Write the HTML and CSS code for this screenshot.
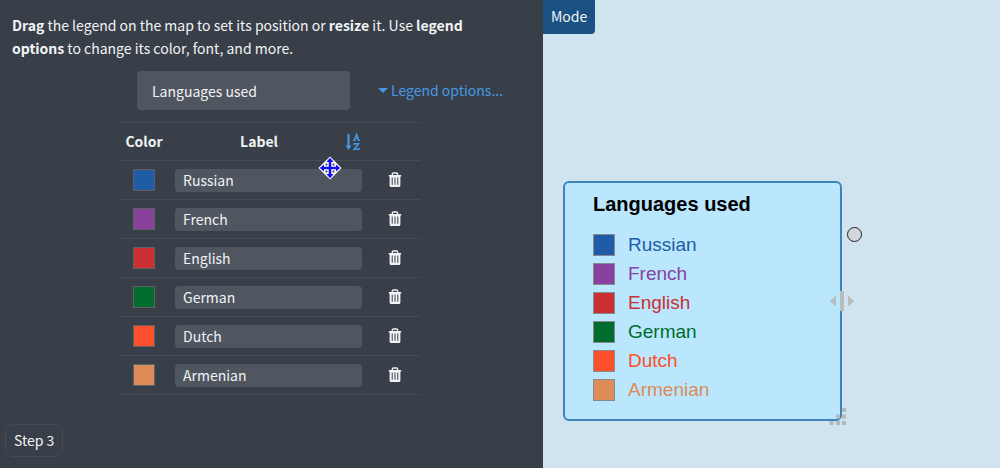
FILE: index.html
```html
<!DOCTYPE html>
<html lang="en">
<head>
    <meta charset="UTF-8">
    <meta name="viewport" content="width=device-width, initial-scale=1.0">
    <title>Map legend</title>
    <link rel="stylesheet" href="styles.css">
</head>
<body>
    <svg class="sprite" aria-hidden="true">
        <symbol id="icon-trash" viewBox="0 0 14 16">
            <path d="M4.3 3.2V2.2Q4.3 1 5.5 1H8.5Q9.7 1 9.7 2.2V3.2" fill="none" stroke="currentColor" stroke-width="1.3"/>
            <path fill="currentColor" fill-rule="evenodd" d="M.8 3H13.2V4.6H12.4V13.4Q12.4 15 10.8 15H3.2Q1.6 15 1.6 13.4V4.6H.8ZM3.7 5.6V12.8H4.7V5.6ZM6.5 5.6V12.8H7.5V5.6ZM9.3 5.6V12.8H10.3V5.6Z"/>
        </symbol>
    </svg>

    <div class="app">
        <main class="panel">
            <p class="intro"><b>Drag</b> the legend on the map to set its position or <b>resize</b> it. Use <b>legend options</b> to change its color, font, and more.</p>

            <div class="title-row">
                <input type="text" class="title-input" value="Languages used" aria-label="Legend title">
                <a href="#" class="options-link"><span class="caret"></span>Legend options...</a>
            </div>

            <table class="legend-table">
                <thead>
                    <tr>
                        <th class="col-color">Color</th>
                        <th class="col-label">
                            <div class="label-head">
                                <span>Label</span>
                                <button type="button" class="icon-button sort-button" aria-label="Sort labels A to Z">
                                    <svg width="16" height="18" viewBox="0 0 16 18" fill="none" stroke="currentColor">
                                        <path d="M3.5 1V14" stroke-width="2.2"/>
                                        <path d="M.4 12.4H6.6L3.5 17Z" fill="currentColor" stroke="none"/>
                                        <path d="M9.2 7.3L11.5 1.4L13.8 7.3M9.8 5.4H13.2M8 7.3H10.4M12.6 7.3H15" stroke-width="1.4"/>
                                        <path d="M9.1 12V10.7H13.6L9.2 16.2H14V14.8" stroke-width="1.4"/>
                                    </svg>
                                </button>
                            </div>
                        </th>
                        <th class="col-delete"></th>
                    </tr>
                </thead>
                <tbody>
                    <tr>
                        <td><button type="button" class="swatch russian" aria-label="Russian color"></button></td>
                        <td><input type="text" class="label-input" value="Russian" aria-label="Label 1"></td>
                        <td><button type="button" class="icon-button" aria-label="Delete Russian"><svg width="14" height="16"><use href="#icon-trash"/></svg></button></td>
                    </tr>
                    <tr>
                        <td><button type="button" class="swatch french" aria-label="French color"></button></td>
                        <td><input type="text" class="label-input" value="French" aria-label="Label 2"></td>
                        <td><button type="button" class="icon-button" aria-label="Delete French"><svg width="14" height="16"><use href="#icon-trash"/></svg></button></td>
                    </tr>
                    <tr>
                        <td><button type="button" class="swatch english" aria-label="English color"></button></td>
                        <td><input type="text" class="label-input" value="English" aria-label="Label 3"></td>
                        <td><button type="button" class="icon-button" aria-label="Delete English"><svg width="14" height="16"><use href="#icon-trash"/></svg></button></td>
                    </tr>
                    <tr>
                        <td><button type="button" class="swatch german" aria-label="German color"></button></td>
                        <td><input type="text" class="label-input" value="German" aria-label="Label 4"></td>
                        <td><button type="button" class="icon-button" aria-label="Delete German"><svg width="14" height="16"><use href="#icon-trash"/></svg></button></td>
                    </tr>
                    <tr>
                        <td><button type="button" class="swatch dutch" aria-label="Dutch color"></button></td>
                        <td><input type="text" class="label-input" value="Dutch" aria-label="Label 5"></td>
                        <td><button type="button" class="icon-button" aria-label="Delete Dutch"><svg width="14" height="16"><use href="#icon-trash"/></svg></button></td>
                    </tr>
                    <tr>
                        <td><button type="button" class="swatch armenian" aria-label="Armenian color"></button></td>
                        <td><input type="text" class="label-input" value="Armenian" aria-label="Label 6"></td>
                        <td><button type="button" class="icon-button" aria-label="Delete Armenian"><svg width="14" height="16"><use href="#icon-trash"/></svg></button></td>
                    </tr>
                </tbody>
            </table>

            <div class="step">Step 3</div>

            <!-- move cursor -->
            <svg class="move-cursor" width="24" height="24" viewBox="0 0 24 24">
                <path d="M12 .4L23.6 12L12 23.6L.4 12Z" fill="#fff"/>
                <path d="M12 4V20M4 12H20" stroke="#1010e8" stroke-width="2.6"/>
                <path d="M12 1.8L15.6 6H8.4ZM12 22.2L15.6 18H8.4ZM1.8 12L6 8.4V15.6ZM22.2 12L18 8.4V15.6Z" fill="#1010e8"/>
                <path d="M7.6 7.6H9.4V9.4H7.6ZM14.6 7.6H16.4V9.4H14.6ZM7.6 14.6H9.4V16.4H7.6ZM14.6 14.6H16.4V16.4H14.6Z" fill="#3c434c"/>
            </svg>
        </main>

        <section class="map">
            <button type="button" class="mode-button">Mode</button>
            <div class="legend">
                <h2>Languages used</h2>
                <ul>
                    <li class="russian">Russian</li>
                    <li class="french">French</li>
                    <li class="english">English</li>
                    <li class="german">German</li>
                    <li class="dutch">Dutch</li>
                    <li class="armenian">Armenian</li>
                </ul>
                <svg class="resize-x" width="24" height="20" viewBox="0 0 24 20" fill="#b9bcbb">
                    <path d="M0 10L6 4.5V15.5ZM24 10L18 4.5V15.5ZM10 0H14V20H10Z"/>
                </svg>
                <svg class="resize-corner" width="18" height="18" viewBox="0 0 18 18" fill="#b5b9b8">
                    <path d="M13 0H17V4H13ZM7 6.5H11V10.5H7ZM13 6.5H17V10.5H13ZM.5 13H4.5V17H.5ZM7 13H11V17H7ZM13 13H17V17H13Z"/>
                </svg>
            </div>
            <span class="map-pin"></span>
        </section>
    </div>
</body>
</html>
```
FILE: styles.css
```css
:root {
    --panel: #393f48;
    --field: #505660;
    --line: #464c55;
    --text: #f1f3f5;
    --link: #4599e4;
    --map: #d0e4ef;
}

*,
*::before {
    margin: 0;
    padding: 0;
    box-sizing: border-box;
}

body {
    font-family: "Noto Sans CJK SC", "Source Sans Pro", sans-serif;
    font-size: 14px;
    line-height: 23px;
    color: var(--text);
    background-color: var(--map);
}

input,
button {
    font: inherit;
    color: inherit;
    border: none;
}

.sprite {
    position: absolute;
    width: 0;
    height: 0;
}

.app {
    display: grid;
    grid-template-columns: minmax(0, 543px) 1fr;
    min-height: 100vh;
}

/* Left panel */
.panel {
    position: relative;
    display: flex;
    flex-direction: column;
    padding: 14px 5px 11px;
    background-color: var(--panel);
}

.intro {
    max-width: 480px;
    padding-left: 7px;
}

.title-row {
    display: flex;
    align-items: center;
    gap: 28px;
    margin: 11px 0 12px 132px;
}

.title-input {
    width: 213px;
    height: 39px;
    padding: 0 15px;
    border-radius: 4px;
    background-color: var(--field);
}

.options-link {
    display: flex;
    align-items: center;
    gap: 3px;
    color: var(--link);
    text-decoration: none;
}

.caret {
    border: 5px solid transparent;
    border-top-color: var(--link);
    border-bottom: none;
}

.legend-table {
    width: 302px;
    margin-left: 114px;
    border-collapse: collapse;
    table-layout: fixed;
}

.legend-table tr {
    height: 39px;
    border-top: 1px solid var(--line);
    border-bottom: 1px solid var(--line);
}

.legend-table thead tr {
    height: 38px;
}

.legend-table th,
.legend-table td {
    text-align: center;
    vertical-align: middle;
}

.col-color {
    width: 50px;
}

.col-delete {
    width: 53px;
}

.label-head {
    display: flex;
    align-items: center;
    justify-content: flex-end;
    gap: 67px;
    padding-right: 7px;
}

.icon-button {
    display: block;
    margin: 0 auto;
    background: none;
    cursor: pointer;
}

.icon-button svg {
    display: block;
}

.sort-button {
    margin: 0;
    color: var(--link);
}

.swatch {
    display: block;
    width: 22px;
    height: 22px;
    margin: 0 auto;
    border: 1px solid #5d6064;
    background-color: var(--color);
}

.label-input {
    display: block;
    width: 187px;
    height: 23px;
    margin: 0 auto;
    padding: 0 8px;
    border-radius: 4px;
    background-color: var(--field);
}

.step {
    align-self: flex-start;
    margin-top: auto;
    padding: 4px 8px;
    border: 1px solid var(--line);
    border-radius: 8px;
}

.move-cursor {
    position: absolute;
    left: 318px;
    top: 156px;
}

/* Map */
.map {
    position: relative;
    background-color: var(--map);
}

.mode-button {
    display: block;
    padding: 5px 8px 6px;
    border-radius: 0 0 4px 0;
    background-color: #1b5182;
}

.legend {
    position: absolute;
    left: 20px;
    top: 181px;
    width: 279px;
    padding: 9px 28px 15px;
    border: 2px solid #3d84b9;
    border-radius: 6px;
    background-color: #bae7fd;
    font-family: "Liberation Sans", Arial, sans-serif;
}

.legend h2 {
    margin-bottom: 14px;
    font-size: 20px;
    line-height: 24px;
    color: #000;
}

.legend ul {
    list-style: none;
}

.legend li {
    display: flex;
    align-items: center;
    gap: 13px;
    height: 29px;
    font-size: 19px;
    color: var(--color);
}

.legend li::before {
    content: "";
    width: 22px;
    height: 22px;
    border: 1px solid #858b8e;
    background-color: var(--color);
}

.resize-x {
    position: absolute;
    right: -14px;
    top: 108px;
}

.resize-corner {
    position: absolute;
    right: -7px;
    bottom: -7px;
}

.map-pin {
    position: absolute;
    left: 304px;
    top: 227px;
    width: 15px;
    height: 15px;
    border: 1px solid #222;
    border-radius: 50%;
    background-color: #d3d6da;
}

.russian { --color: #205ca6; }
.french { --color: #88419d; }
.english { --color: #cb3133; }
.german { --color: #006d2c; }
.dutch { --color: #fd4f2a; }
.armenian { --color: #dc8b59; }
```
